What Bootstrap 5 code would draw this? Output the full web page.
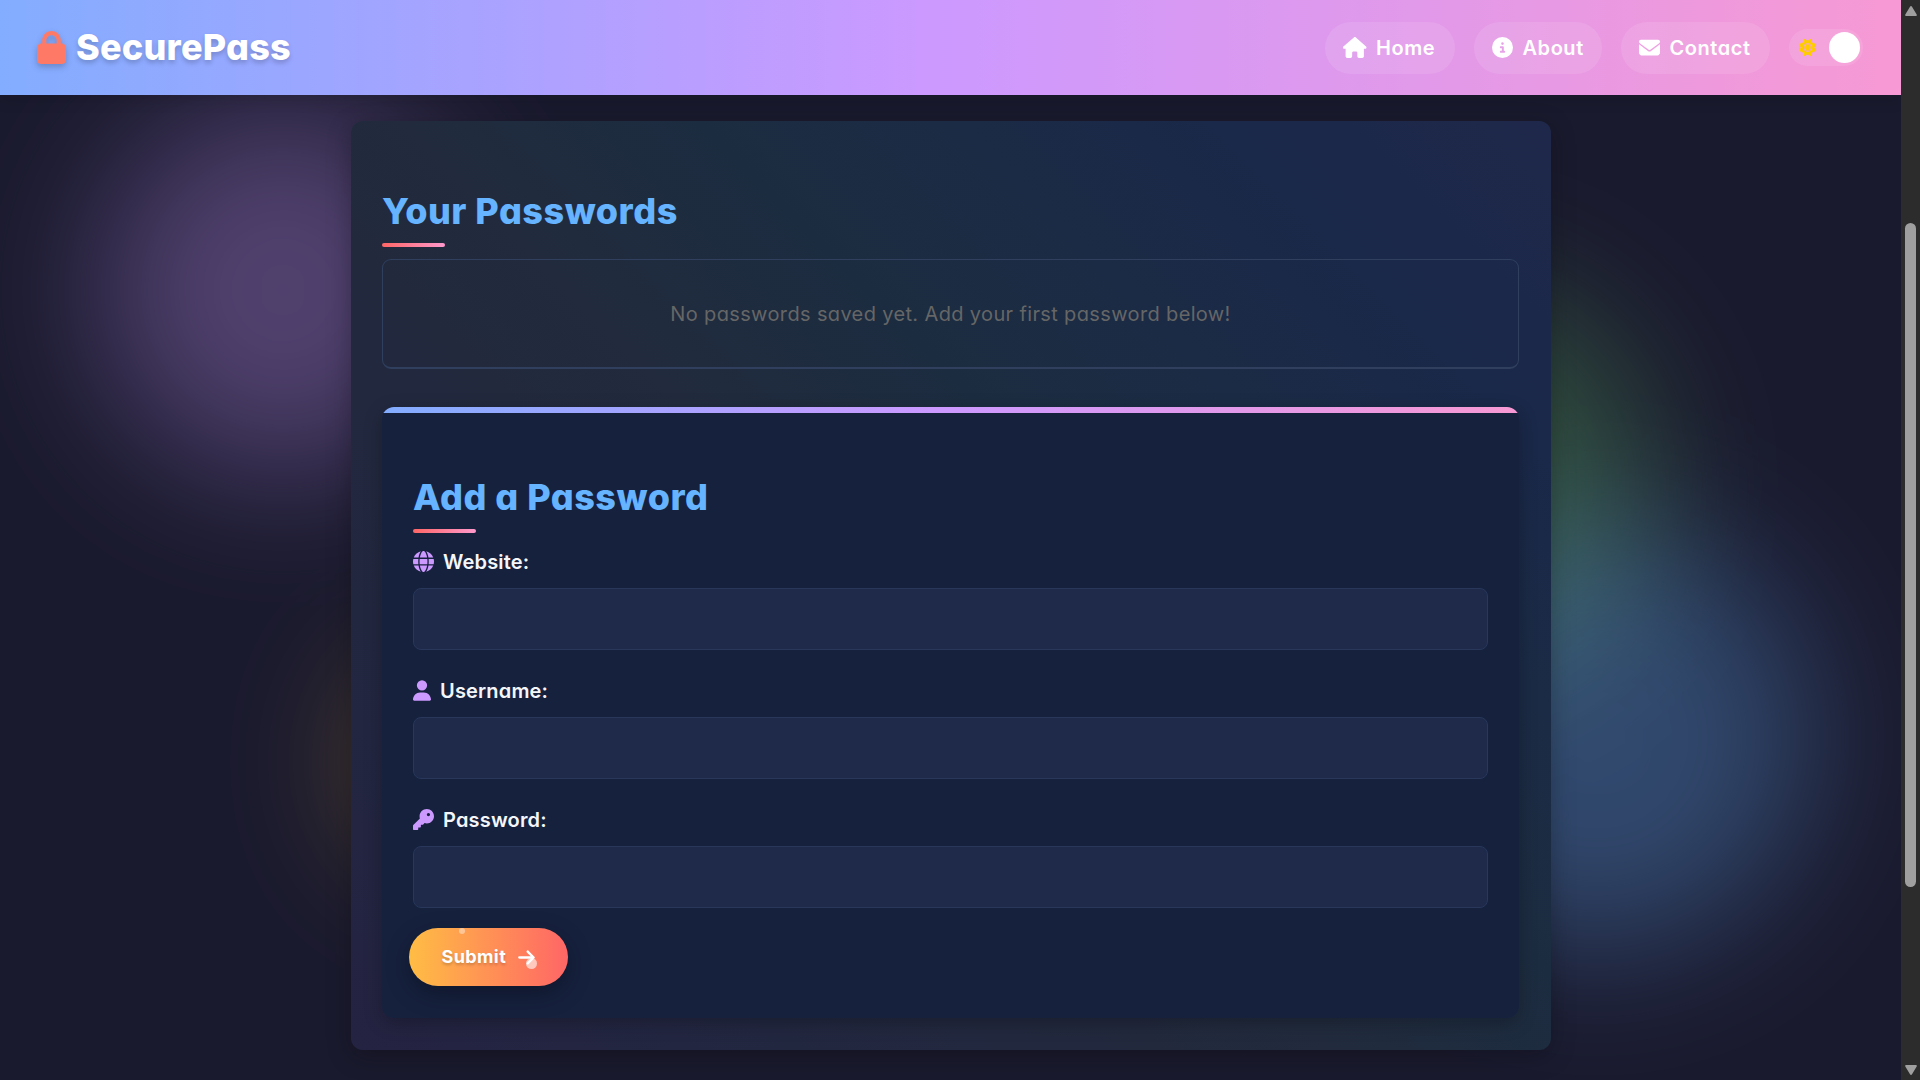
<!DOCTYPE html>
<html lang="en">
<head>
<meta charset="utf-8">
<meta name="viewport" content="width=device-width, initial-scale=1">
<title>SecurePass</title>
<link rel="stylesheet" href="https://cdn.jsdelivr.net/npm/bootstrap@5.3.0/dist/css/bootstrap.min.css">
<style>
  :root { --rainbow: linear-gradient(90deg, #83adff, #cc99ff 49%, #f799d4); }
  body {
    font-family: Inter, "Open Sans", sans-serif;
    font-feature-settings: "cv11";
    font-size: 20px;
    line-height: 30px;
    background: #1a1a2e;
    color: #f4f6fa;
  }
  svg { fill: currentColor; display: block; flex: none; }
  .viewport-pane { position: relative; isolation: isolate; min-width: 0; }

  /* soft background lights */
  .glow { position: absolute; z-index: -1; border-radius: 50%; opacity: .3; filter: blur(70px); }
  .glow-violet { left: 98px; top: 105px; width: 370px; height: 370px; background: #cc99ff; }
  .glow-green { left: 1250px; top: 285px; width: 400px; height: 400px; background: #66cc66; }
  .glow-blue { left: 1385px; top: 525px; width: 425px; height: 425px; background: #66b3ff; }
  .glow-gold { left: 358px; top: 654px; width: 214px; height: 214px; background: #ffb833; }

  .top-bar {
    height: 95px; padding: 0 38px 0 37px;
    background: var(--rainbow);
    box-shadow: 0 4px 15px rgba(0, 0, 0, .12);
    color: #fff;
  }
  .brand-link { gap: 10px; color: #fff; }
  .brand-link svg { color: #ff7a66; filter: drop-shadow(0 3px 3px rgba(0, 0, 0, .22)); }
  .brand-text { font-size: 36px; font-weight: 800; letter-spacing: .22px; line-height: 53px; margin-top: -1px; text-shadow: 0 3px 5px rgba(0, 0, 0, .2); }
  .nav-pill { height: 52px; padding: 0 19px 0 18px; border-radius: 26px; background: rgba(255, 255, 255, .1); letter-spacing: .55px; color: #fff; font-weight: 600; }
  .nav-pill svg { margin-right: 9.5px; }
  .theme-switch { width: 74px; height: 37px; border-radius: 19px; padding: 0 3px 0 9px; background: rgba(255, 255, 255, .1); }
  .switch-knob { width: 31px; height: 31px; border-radius: 50%; background: #fff; }

  .vault {
    width: 1200px; height: 929px; margin: 26px 0 0 351px; padding: 63px 32px 0 31px;
    border-radius: 12px;
    background: linear-gradient(45deg, #242342, #222740 21%, #22293d 38%, #212b3d 46%, #1c2c40 60%, #1b2b45 72%, #1a2849 84%, #1f284a);
    box-shadow: 0 6px 24px rgba(0, 0, 0, .26);
  }
  .section-title { font-size: 36px; font-weight: 800; line-height: 54px; letter-spacing: .5px; color: #66b3ff; }
  .section-title::after { content: ""; display: block; width: 62.500px; height: 4px; margin-top: 5px; border-radius: 2px; background: linear-gradient(90deg, #ff6666, #ff99cc); }
  .empty-note { height: 110px; margin-top: 12px; border: 1px solid #2f3f5d; border-bottom-width: 2px; border-radius: 9px; color: #666; letter-spacing: .36px; }
  .entry-form { height: 611px; margin-top: 38px; padding: 57px 31px 0; border-radius: 12px; background: #16213e; overflow: hidden; }
  .entry-form::before { content: ""; display: block; height: 6px; margin: -57px -31px 57px; background: var(--rainbow); }
  .form-shadow { border-radius: 12px; box-shadow: 0 5px 18px rgba(0, 0, 0, .25); }
  .field-label { height: 30px; font-weight: 600; letter-spacing: .17px; margin-bottom: 11px; }
  .field-label svg { color: #cc99ff; margin: -1px 9px 0 0; }
  .field-box, .field-box:focus { height: 62px; background: #1f2a4a; border: 1px solid #28375a; border-radius: 8px; color: #fff; }
  .submit-btn {
    position: relative; width: 159px; height: 58px; margin: 20px 0 0 -4px; padding: 0 32.500px;
    border: 0; border-radius: 29px; color: #fff;
    font-size: 18px; font-weight: 700; letter-spacing: .4px;
    background: linear-gradient(90deg, #ffbd44, #ff6666);
    box-shadow: 0 8px 25px rgba(0, 0, 0, .32);
    text-shadow: 0 2px 3px rgba(0, 0, 0, .2);
  }
  .submit-btn svg { margin-left: 12px; }
  .spark { position: absolute; border-radius: 50%; background: #fff; }
  .spark-small { left: 50px; top: 0; width: 6px; height: 6px; opacity: .4; }
  .spark-large { left: 117px; top: 30px; width: 11px; height: 11px; opacity: .6; }

  .scroll-rail { width: 19px; background: #2c2c2c; padding: 6px 0 5px; }
  .scroll-rail svg { fill: #9f9f9f; }
  .scroll-thumb { width: 11px; height: 664px; margin: 207px 0 auto; border-radius: 5.5px; background: #9f9f9f; }
</style>
<script src="https://cdn.jsdelivr.net/npm/bootstrap@5.3.0/dist/js/bootstrap.bundle.min.js"></script>
</head>
<body class="d-flex vh-100 overflow-hidden">
<div class="viewport-pane flex-grow-1 overflow-hidden">
  <div class="glow glow-gold"></div>
  <div class="glow glow-green"></div>
  <div class="glow glow-violet"></div>
  <div class="glow glow-blue"></div>

  <header class="top-bar d-flex align-items-center justify-content-between">
    <a class="brand-link d-flex align-items-center text-decoration-none" href="#">
      <svg width="29" height="33" viewBox="0 0 448 512"><path d="M144 144v48H304V144c0-44.200-35.800-80-80-80s-80 35.800-80 80zM80 192V144C80 64.500 144.500 0 224 0s144 64.500 144 144v48h16c35.300 0 64 28.700 64 64V448c0 35.300-28.700 64-64 64H64c-35.300 0-64-28.700-64-64V256c0-35.300 28.700-64 64-64H80z"/></svg>
      <span class="brand-text">SecurePass</span>
    </a>
    <nav class="d-flex align-items-center">
      <a class="nav-pill d-flex align-items-center text-decoration-none" href="#" style="width:130px;margin-right:19px">
        <svg width="23.500" height="21" viewBox="0 0 576 512"><path d="M575.800 255.500c0 18-15 32.100-32 32.100h-32l.7 160.200c0 2.700-.2 5.400-.5 8.100V472c0 22.100-17.900 40-40 40H456c-1.100 0-2.200 0-3.300-.1c-1.400 .1-2.800 .1-4.200 .1H416 392c-22.100 0-40-17.900-40-40V448 384c0-17.700-14.300-32-32-32H256c-17.700 0-32 14.300-32 32v64 24c0 22.100-17.900 40-40 40H160 128.100c-1.500 0-3-.1-4.500-.2c-1.200 .1-2.400 .2-3.600 .2H104c-22.100 0-40-17.900-40-40V360c0-.9 0-1.900 .1-2.800V287.600H32c-18 0-32-14-32-32.100c0-9 3-17 10-24L266.400 8c7-7 15-8 22-8s15 2 21 7L564.800 231.500c8 7 12 15 11 24z"/></svg>Home</a>
      <a class="nav-pill d-flex align-items-center text-decoration-none" href="#" style="width:128px;margin-right:19px">
        <svg width="21" height="21" viewBox="0 0 512 512"><path d="M256 512A256 256 0 1 0 256 0a256 256 0 1 0 0 512zM216 336h24V272H216c-13.300 0-24-10.700-24-24s10.700-24 24-24h48c13.300 0 24 10.700 24 24v88h8c13.300 0 24 10.700 24 24s-10.700 24-24 24H216c-13.300 0-24-10.700-24-24s10.700-24 24-24zm40-208a32 32 0 1 1 0 64 32 32 0 1 1 0-64z"/></svg>About</a>
      <a class="nav-pill d-flex align-items-center text-decoration-none" href="#" style="width:149px;margin-right:19px">
        <svg width="21" height="21" viewBox="0 0 512 512"><path d="M48 64C21.500 64 0 85.500 0 112c0 15.100 7.100 29.300 19.200 38.400L236.800 313.600c11.400 8.500 27 8.500 38.400 0L492.800 150.400c12.100-9.100 19.200-23.300 19.200-38.400c0-26.500-21.500-48-48-48H48zM0 176V384c0 35.300 28.700 64 64 64H448c35.300 0 64-28.700 64-64V176L294.400 339.200c-22.800 17.100-54 17.100-76.800 0L0 176z"/></svg>Contact</a>
      <div class="theme-switch d-flex align-items-center justify-content-between">
        <svg width="19" height="19" viewBox="-10 -10 20 20" style="color:#ffcc00"><path fill-rule="evenodd" d="M-3.700-9.200L0-7.200L3.700-9.200L5.100-5.100L9.200-3.700L7.200 0L9.200 3.700L5.100 5.100L3.700 9.200L0 7.200L-3.700 9.200L-5.100 5.100L-9.200 3.700L-7.200 0L-9.200-3.700L-5.100-5.100ZM0-4.600A4.600 4.600 0 1 0 0 4.600A4.600 4.600 0 1 0 0-4.600Z"/><circle r="3.300"/></svg>
        <span class="switch-knob"></span>
      </div>
    </nav>
  </header>

  <main class="vault">
    <h2 class="section-title mb-0">Your Passwords</h2>
    <div class="empty-note d-flex align-items-center justify-content-center">No passwords saved yet. Add your first password below!</div>

    <div class="form-shadow">
    <form class="entry-form">
      <h2 class="section-title mb-0">Add a Password</h2>
      <label class="field-label d-flex align-items-center" for="site" style="margin-top:14px">
        <svg width="21" height="21" viewBox="0 0 512 512"><path d="M352 256c0 22.200-1.200 43.600-3.300 64H163.300c-2.200-20.400-3.300-41.800-3.300-64s1.200-43.600 3.300-64H348.700c2.200 20.400 3.300 41.800 3.300 64zm28.800-64H503.900c5.300 20.500 8.100 41.900 8.100 64s-2.800 43.500-8.100 64H380.800c2.100-20.600 3.200-42 3.200-64s-1.100-43.400-3.200-64zm112.600-32H376.700c-10-63.900-29.800-117.400-55.300-151.600c78.300 20.700 142 77.500 171.900 151.600zm-149.100 0H167.700c6.100-36.400 15.500-68.600 27-94.700c10.500-23.600 22.200-40.700 33.500-51.500C239.400 3.200 248.700 0 256 0s16.600 3.200 27.800 13.800c11.300 10.800 23 27.900 33.500 51.500c11.600 26 20.900 58.200 27 94.700zm-209 0H18.600C48.600 85.900 112.200 29.100 190.600 8.400C165.100 42.600 145.300 96.100 135.300 160zM8.100 192H131.200c-2.100 20.600-3.200 42-3.200 64s1.100 43.400 3.200 64H8.100C2.800 299.500 0 278.100 0 256s2.800-43.500 8.100-64zM194.700 446.600c-11.600-26-20.900-58.200-27-94.600H344.300c-6.100 36.400-15.500 68.600-27 94.600c-10.500 23.600-22.200 40.700-33.500 51.500C272.600 508.800 263.300 512 256 512s-16.600-3.200-27.800-13.800c-11.300-10.800-23-27.900-33.500-51.500zM135.300 352c10 63.900 29.800 117.400 55.300 151.600C112.200 482.900 48.600 426.100 18.600 352H135.300zm358.100 0c-30 74.100-93.600 130.900-171.900 151.600c25.500-34.200 45.200-87.700 55.300-151.600H493.400z"/></svg>Website:</label>
      <input class="field-box form-control" id="site" type="text">
      <label class="field-label d-flex align-items-center" for="user" style="margin-top:26px">
        <svg width="18" height="21" viewBox="0 0 448 512"><path d="M224 256A128 128 0 1 0 224 0a128 128 0 1 0 0 256zm-45.700 48C79.800 304 0 383.800 0 482.300C0 498.700 13.300 512 29.700 512H418.300c16.400 0 29.700-13.300 29.700-29.700C448 383.800 368.200 304 269.700 304H178.300z"/></svg>Username:</label>
      <input class="field-box form-control" id="user" type="text">
      <label class="field-label d-flex align-items-center" for="pass" style="margin-top:26px">
        <svg width="21" height="21" viewBox="0 0 512 512"><path d="M336 352c97.200 0 176-78.800 176-176S433.200 0 336 0S160 78.800 160 176c0 18.700 2.900 36.800 8.300 53.700L7 391c-4.500 4.500-7 10.600-7 17v80c0 13.300 10.700 24 24 24h80c13.300 0 24-10.700 24-24V448h40c13.300 0 24-10.700 24-24V384h40c6.400 0 12.500-2.500 17-7l33.300-33.300c16.900 5.400 35 8.300 53.700 8.300zM376 96a40 40 0 1 1 0 80 40 40 0 1 1 0-80z"/></svg>Password:</label>
      <input class="field-box form-control" id="pass" type="password">
      <button class="submit-btn d-flex align-items-center" type="button">Submit
        <svg width="17" height="19" viewBox="0 0 448 512"><path d="M438.600 278.600c12.500-12.500 12.500-32.800 0-45.300l-160-160c-12.500-12.500-32.800-12.500-45.300 0s-12.500 32.800 0 45.300L338.800 224 32 224c-17.700 0-32 14.300-32 32s14.300 32 32 32l306.700 0L233.400 393.400c-12.500 12.500-12.500 32.800 0 45.300s32.800 12.500 45.300 0l160-160z"/></svg>
        <span class="spark spark-small"></span>
        <span class="spark spark-large"></span>
      </button>
    </form>
    </div>
  </main>
</div>

<div class="scroll-rail d-flex flex-column align-items-center flex-shrink-0">
  <svg width="12" height="10" viewBox="0 0 12 10"><path d="M6 0Q6.600 0 7 .7L11.700 8.500Q12.200 10 11 10H1Q-.2 10 .3 8.500L5 .7Q5.400 0 6 0Z"/></svg>
  <span class="scroll-thumb"></span>
  <svg width="12" height="10" viewBox="0 0 12 10"><path d="M6 10Q6.600 10 7 9.300L11.700 1.500Q12.200 0 11 0H1Q-.2 0 .3 1.500L5 9.300Q5.400 10 6 10Z"/></svg>
</div>
</body>
</html>
